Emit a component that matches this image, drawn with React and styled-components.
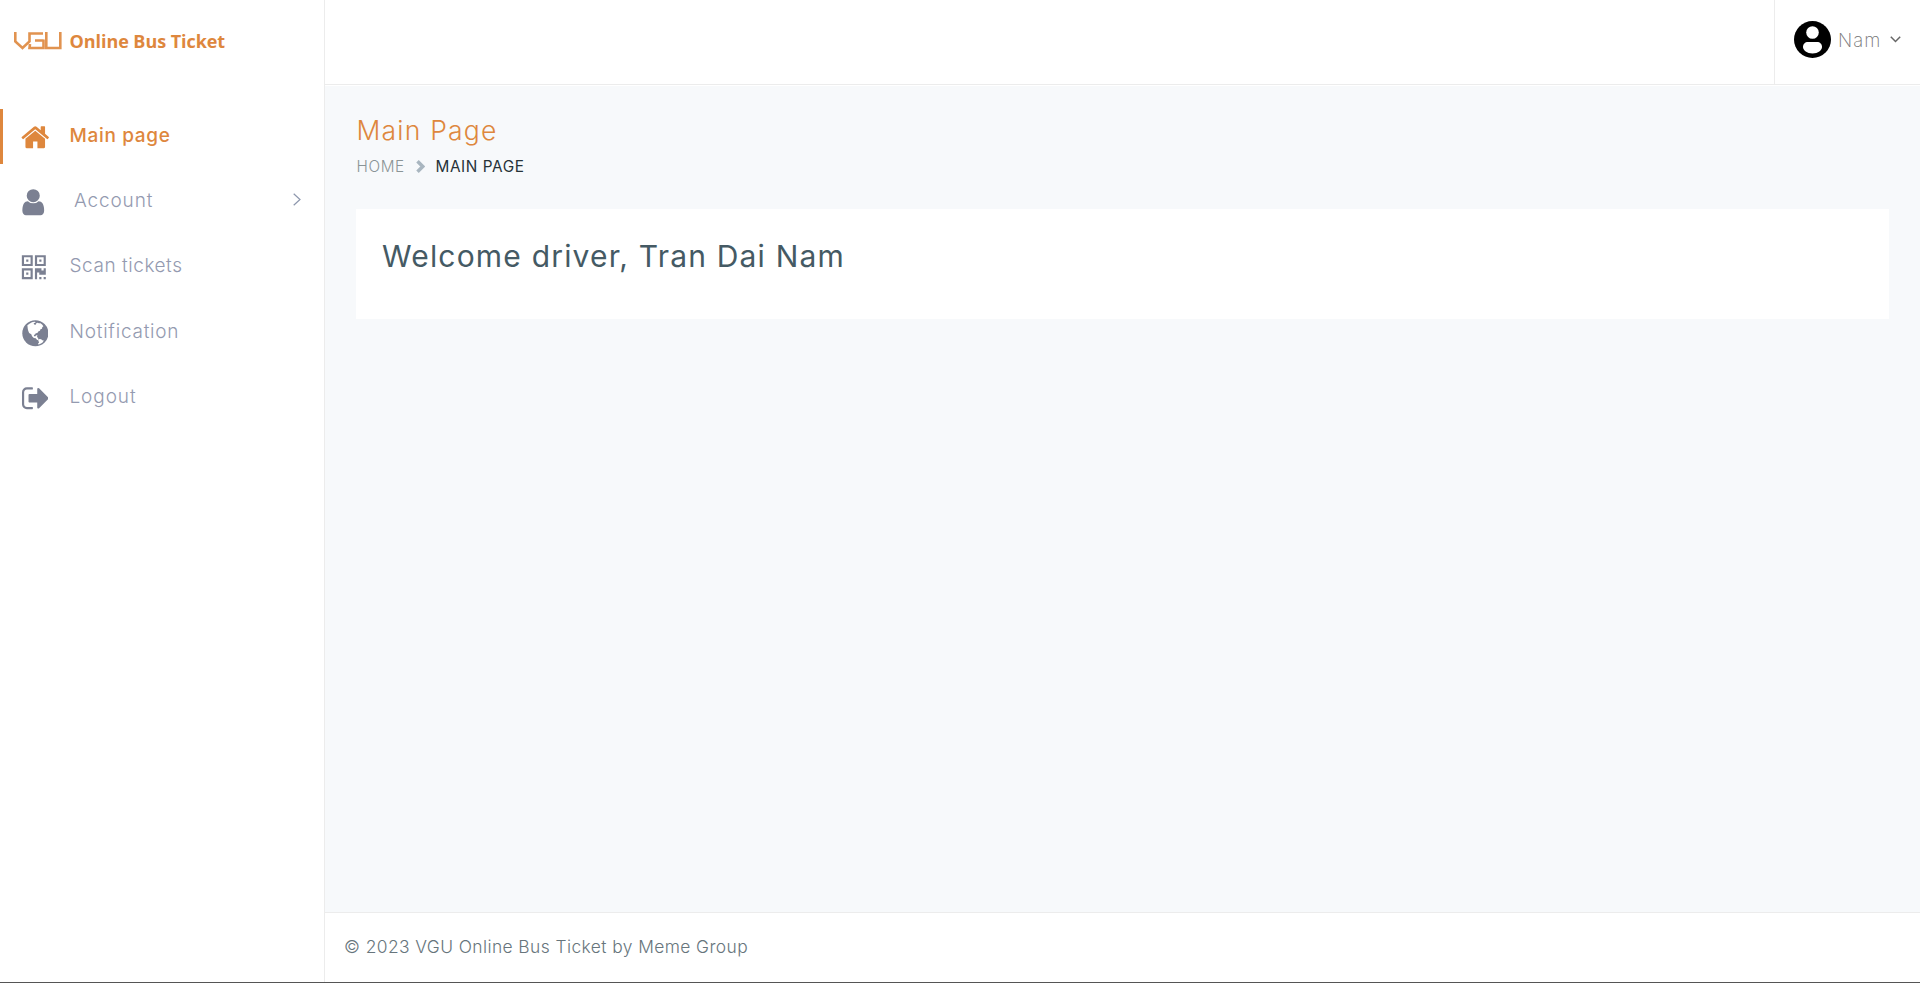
import React from 'react';
import styled, { createGlobalStyle } from 'styled-components';

const accent = '#de873d';
const line = '#ececec';

const GlobalStyle = createGlobalStyle`
  * { box-sizing: border-box; }
  body { margin: 0; background: #fff; font-family: Inter, "Open Sans", sans-serif; font-weight: 300; }
  h1, h2, p { margin: 0; }
`;

const Page = styled.div`
  display: flex;
  height: 983px;
  border-bottom: 1px solid #555;
  overflow: hidden;
`;

const Sidebar = styled.aside`
  width: 325px;
  flex: none;
  border-right: 1px solid ${line};
`;

const Brand = styled.div`
  display: flex;
  align-items: center;
  height: 82px;
  padding-left: 14px;
  color: ${accent};
`;

const BrandMark = styled.svg`
  width: 48px;
  height: 18px;
  margin-right: 7.5px;
`;

const BrandName = styled.span`
  font: 700 18px/24px "Open Sans", sans-serif;
  letter-spacing: -0.06px;
  white-space: nowrap;
`;

const Nav = styled.nav`
  display: flex;
  flex-direction: column;
  gap: 10.2px;
  padding-top: 27px;
`;

const NavItem = styled.a`
  display: flex;
  align-items: center;
  height: 55px;
  padding-left: ${(p) => (p.$active ? '17px' : '17.5px')};
  padding-right: 23px;
  border-left: ${(p) => (p.$active ? `3px solid ${accent}` : '0')};
  color: ${(p) => (p.$active ? accent : '#949ab0')};
  font-size: 19px;
  font-weight: ${(p) => (p.$active ? 450 : 350)};
`;

const NavIcon = styled.svg`
  width: 30.5px;
  height: 30.5px;
  flex: none;
  fill: ${(p) => (p.$active ? accent : '#7b8092')};
  margin-top: 2px;
`;

const NavLabel = styled.span`
  flex: 1;
  line-height: 24px;
  padding-left: ${(p) => p.$indent || '21.5px'};
  padding-bottom: 0.8px;
  letter-spacing: ${(p) => p.$track};
  white-space: nowrap;
`;

const Arrow = styled.svg`
  width: ${(p) => p.$w}px;
  height: ${(p) => p.$h}px;
  flex: none;
  fill: none;
  stroke: ${(p) => p.$color};
  stroke-width: ${(p) => p.$stroke};
  margin-bottom: ${(p) => p.$lift || 0}px;
`;

const Main = styled.main`
  flex: 1;
  display: flex;
  flex-direction: column;
`;

const Header = styled.header`
  height: 85px;
  display: flex;
  justify-content: flex-end;
  border-bottom: 1px solid ${line};
`;

const Account = styled.div`
  display: flex;
  align-items: center;
  width: 146px;
  padding: 0 0 5px 19px;
  border-left: 1px solid ${line};
`;

const Avatar = styled.svg`
  width: 37px;
  height: 37px;
  flex: none;
`;

const AccountName = styled.span`
  width: 59px;
  flex: none;
  padding-left: 7px;
  padding-top: 1px;
  color: #777;
  font-size: 18.5px;
  font-weight: 250;
  line-height: 24px;
  letter-spacing: 1.1px;
`;

const Content = styled.section`
  flex: 1;
  padding: 29px 31px 0;
  background: #f7f9fb;
  border-top: 1px solid #fff;
`;

const Title = styled.h1`
  color: ${accent};
  font-size: 26.5px;
  font-weight: 300;
  line-height: 30px;
  letter-spacing: 1.2px;
  padding-left: 0.5px;
`;

const Breadcrumb = styled.div`
  display: flex;
  align-items: center;
  height: 24px;
  margin-top: 9px;
  font-size: 15.3px;
`;

const Crumb = styled.span`
  width: ${(p) => p.$width || 'auto'};
  color: ${(p) => (p.$current ? '#263238' : '#8a9496')};
  font-weight: ${(p) => (p.$current ? 400 : 300)};
  letter-spacing: 0.6px;
  padding-left: ${(p) => (p.$current ? '10.5px' : '0.5px')};
  white-space: nowrap;
`;

const Card = styled.div`
  height: 110px;
  margin-top: 31px;
  padding: 27px 26px;
  background: #fff;
`;

const Welcome = styled.h2`
  color: #455a64;
  font-size: 30px;
  font-weight: 400;
  line-height: 40px;
  letter-spacing: 1.19px;
`;

const Footer = styled.footer`
  height: 70px;
  padding: 21px 19px;
  border-top: 1px solid ${line};
  color: #67757c;
  font-size: 17.4px;
  font-weight: 260;
  line-height: 26px;
  letter-spacing: 0.42px;
`;

const icons = {
  home: <path d="M1472 992v480q0 26-19 45t-45 19h-384v-384h-256v384h-384q-26 0-45-19t-19-45v-480q0-1 .5-3t.5-3l575-474 575 474q1 2 1 6zm223-69l-62 74q-8 9-21 11h-3q-13 0-21-7l-692-577-692 577q-12 8-24 7-13-2-21-11l-62-74q-8-10-7-23.5t11-21.5l719-599q32-26 76-26t76 26l244 204v-195q0-14 9-23t23-9h192q14 0 23 9t9 23v408l219 182q10 8 11 21.5t-7 23.5z" />,
  user: <path d="M1536 1399q0 109-62.5 187t-150.5 78h-854q-88 0-150.5-78t-62.5-187q0-85 8.5-160.5t31.5-152 58.5-131 94-89 134.5-34.5q131 128 313 128t313-128q76 0 134.5 34.5t94 89 58.5 131 31.5 152 8.5 160.5zm-256-887q0 159-112.5 271.5t-271.5 112.5-271.5-112.5-112.5-271.5 112.5-271.5 271.5-112.5 271.5 112.5 112.5 271.5z" />,
  qr: (
    <path
      fillRule="evenodd"
      transform="translate(-30 -64)"
      d="M256 192h640v640H256zM384 320v384h384V320zM512 448h128v128H512zM1024 192h640v640h-640zM1152 320v384h384V320zM1280 448h128v128h-128zM256 960h640v640H256zM384 1088v384h384v-384zM512 1216h128v128H512zM1024 960h384v128h128V960h128v384h-384v-128h-128v384h-128zM1280 1472h128v128h-128zM1536 1472h128v128h-128z"
    />
  ),
  globe: (
    <>
      <circle cx="1020" cy="896" r="768" />
      <path
        fill="#fff"
        transform="translate(20 0)"
        d="M530 430l120-95 150-80 130-35 95 10-45 55-80 30 30 65 90 10 35-75 75-40 75 35 100 5 105 85 60 85-65 55-15 90-90 30-30 85-100 50-50 85-95 15-50 70-65 30 20 80 75-10 40-55 85 15-40 95 80 55-10 75 75 35-35 35-110-35-65-95-115-20-105-95-45-115-125-85-50-110-30-115zM1170 1310l70-80 105 25 60 50 95 15-75 115-95 65-125 55-60-25 70-95z"
      />
    </>
  ),
  logout: <path transform="translate(170 0)" d="M704 1440q0 4 1 20t.5 26.5-3 23.5-10 19.5-20.500 6.500h-320q-119 0-203.500-84.500t-84.500-203.500v-704q0-119 84.500-203.500t203.500-84.500h320q13 0 22.500 9.500t9.500 22.500q0 4 1 20t.5 26.500-3 23.500-10 19.500-20.500 6.500h-320q-66 0-113 47t-47 113v704q0 66 47 113t113 47h312l11.500 1 11.500 3 8 5.500 7 9 2 13.500zm928-544q0 26-19 45l-544 544q-19 19-45 19t-45-19-19-45v-288h-448q-26 0-45-19t-19-45v-384q0-26 19-45t45-19h448v-288q0-26 19-45t45-19 45 19l544 544q19 19 19 45z" />,
};

const items = [
  { icon: 'home', label: 'Main page', active: true, indent: '19px', track: '0.67px' },
  { icon: 'user', label: 'Account', indent: '26px', track: '0.85px', arrow: true },
  { icon: 'qr', label: 'Scan tickets', track: '0.55px' },
  { icon: 'globe', label: 'Notification', track: '0.77px' },
  { icon: 'logout', label: 'Logout', track: '0.9px' },
];

export default function App() {
  return (
    <>
      <GlobalStyle />
      <Page>
        <Sidebar>
          <Brand>
            <BrandMark viewBox="0 0 48 18" fill="none" stroke="currentColor" strokeWidth="2.6" strokeOpacity="0.9">
              <path d="M1.300 0v9.500l7.200 6.500 7-6.500V1.500H29M29.500 8.500H21M29.500 7.500V16H15.500L16 12M32.300 0v16h14V0" />
            </BrandMark>
            <BrandName>Online Bus Ticket</BrandName>
          </Brand>
          <Nav>
            {items.map((it) => (
              <NavItem key={it.label} $active={it.active}>
                <NavIcon viewBox="0 0 1792 1792" $active={it.active}>{icons[it.icon]}</NavIcon>
                <NavLabel $indent={it.indent} $track={it.track}>{it.label}</NavLabel>
                {it.arrow && (
                  <Arrow viewBox="0 0 8 13" $w={8} $h={13} $color="#8d97ad" $stroke={1.2} $lift={5}>
                    <path d="M.7.7l6.300 5.800L.7 12.300" />
                  </Arrow>
                )}
              </NavItem>
            ))}
          </Nav>
        </Sidebar>
        <Main>
          <Header>
            <Account>
              <Avatar viewBox="0 0 37 37">
                <circle cx="18.500" cy="18.500" r="18.500" />
                <circle cx="18.500" cy="11.500" r="6.300" fill="#fff" />
                <path fill="#fff" d="M14 21h9c3 0 5 2 5 5s-4 6.500-9.500 6.500S9 29 9 26s2-5 5-5z" />
              </Avatar>
              <AccountName>Nam</AccountName>
              <Arrow viewBox="0 0 11 7" $w={11} $h={7} $color="#666" $stroke={1.5}>
                <path d="M.8.8l4.700 4.700L10.200.8" />
              </Arrow>
            </Account>
          </Header>
          <Content>
            <Title>Main Page</Title>
            <Breadcrumb>
              <Crumb $width="60px">HOME</Crumb>
              <Arrow viewBox="0 0 9 13" $w={9} $h={13} $color="#a9b6c0" $stroke={3.5}>
                <path d="M1.500 1.300l5.200 5.200-5.200 5.200" />
              </Arrow>
              <Crumb $current>MAIN PAGE</Crumb>
            </Breadcrumb>
            <Card>
              <Welcome>Welcome driver, Tran Dai Nam</Welcome>
            </Card>
          </Content>
          <Footer>© 2023 VGU Online Bus Ticket by Meme Group</Footer>
        </Main>
      </Page>
    </>
  );
}
